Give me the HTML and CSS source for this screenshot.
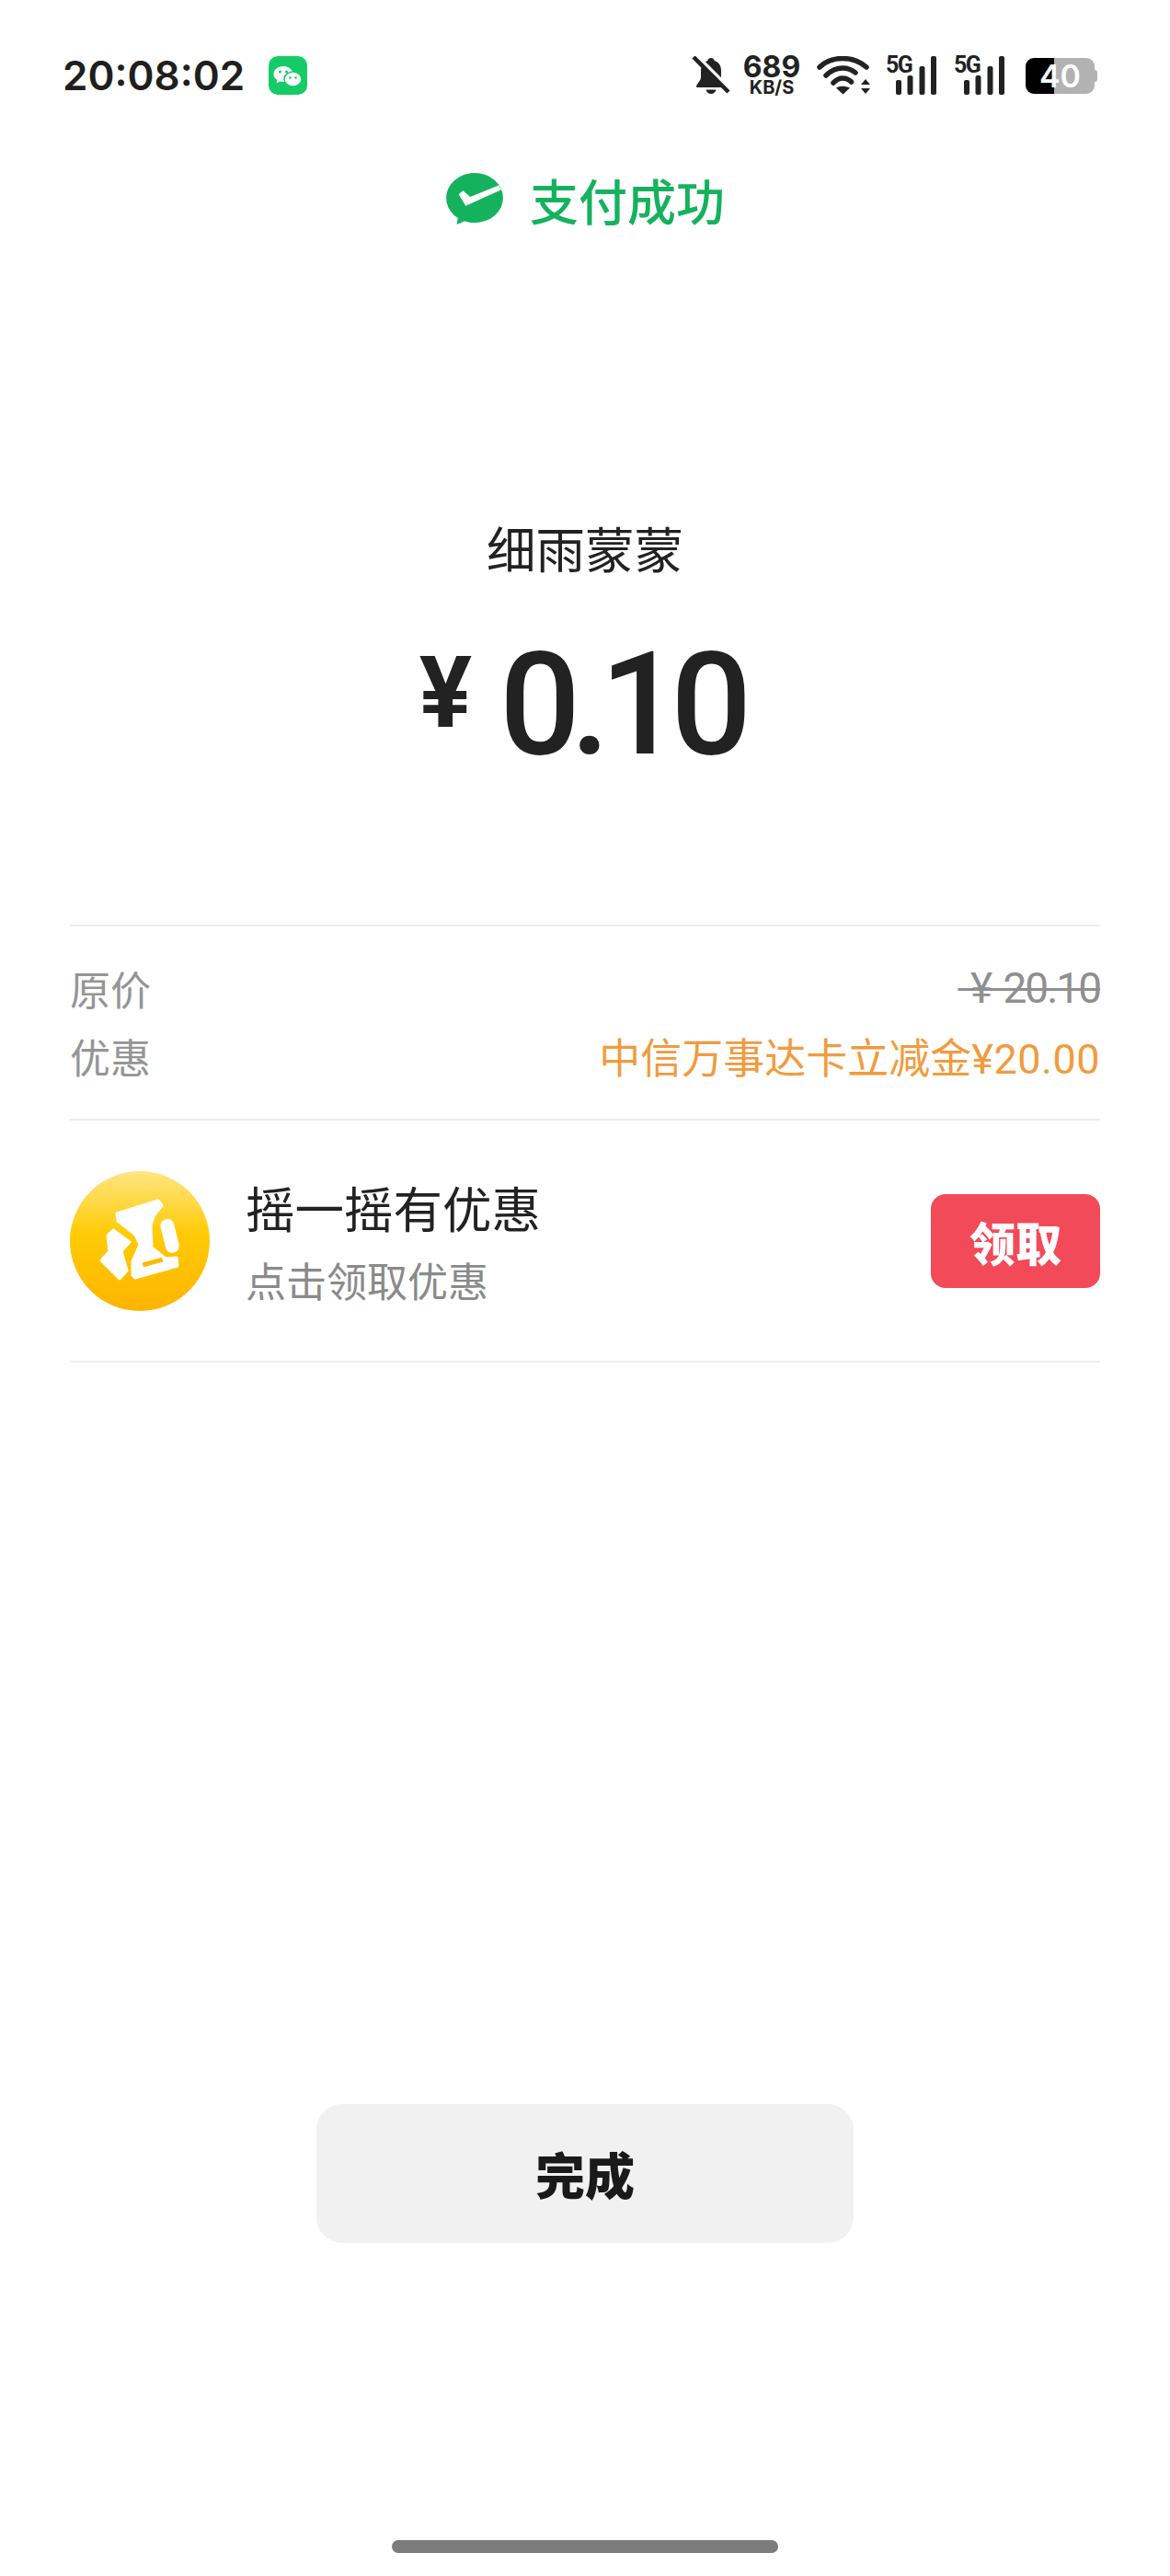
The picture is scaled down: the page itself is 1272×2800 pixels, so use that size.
FILE: index.html
```html
<!DOCTYPE html>
<html lang="zh-CN">
<head>
    <meta charset="UTF-8">
    <meta name="viewport" content="width=device-width, initial-scale=1.0">
    <title>支付成功</title>
    <link rel="stylesheet" href="styles.css">
</head>
<body>
    <div class="page">
        <div class="status">
            <span class="time">20:08:02</span>
            <svg class="app-icon" viewBox="0 0 42 42">
                <rect width="42" height="42" rx="10" fill="#14cc66"/>
                <path d="M16 11c-6 0-10.500 3.800-10.500 8.500 0 2.800 1.500 5 4 6.700l-1 3.300 3.800-1.900c1.200.3 2.400.5 3.700.5 6 0 10.500-3.800 10.500-8.600S22 11 16 11z" fill="#fff"/>
                <ellipse cx="26.500" cy="25" rx="9.500" ry="8" fill="#fff" stroke="#14cc66" stroke-width="1.500"/>
                <circle cx="12.500" cy="17" r="1.500" fill="#14cc66"/>
                <circle cx="19.500" cy="17" r="1.500" fill="#14cc66"/>
                <circle cx="23.500" cy="23.500" r="1.300" fill="#14cc66"/>
                <circle cx="29.500" cy="23.500" r="1.300" fill="#14cc66"/>
            </svg>
            <div class="status-right">
                <svg class="bell" viewBox="0 0 42 42">
                    <path d="M21 2c2 0 3.500 1.300 3.700 3 5 1.500 7.300 5.500 7.300 11v7c0 3 1.800 5.500 4.500 8.500 1 1.200.5 2.500-1 2.500h-29c-1.500 0-2-1.300-1-2.500C7.200 28.500 10 26 10 23v-7c0-5.500 2.300-9.500 7.300-11 .2-1.700 1.700-3 3.700-3z" fill="#222"/>
                    <path d="M15.500 36.500h11c-.6 2.700-2.800 4.500-5.500 4.500s-4.900-1.800-5.500-4.500z" fill="#222"/>
                    <path d="M5 -1L45 39" stroke="#fff" stroke-width="4"/>
                    <path d="M2 1L40 39" stroke="#222" stroke-width="4.500"/>
                </svg>
                <div class="speed">
                    <span class="speed-num">689</span>
                    <span class="speed-unit">KB/S</span>
                </div>
                <svg class="wifi" viewBox="0 0 58 42">
                    <g fill="none" stroke="#222" stroke-width="5.500" stroke-linecap="round">
                        <path d="M3 12C10 5 19 2.500 28 2.500S46 5 54 12"/>
                        <path d="M10 21c5-5 11-8 18-8 5 0 10 1.700 14 5"/>
                        <path d="M18 29c3-3 6-5 10-5 3.500 0 7 1.500 9.500 4"/>
                    </g>
                    <path d="M21 34.500c4-2.500 10-2.500 15 0l-7.500 7z" fill="#222"/>
                    <path d="M48 31l5-6 5 6zM48 35h10l-5 6z" fill="#222"/>
                </svg>
                <div class="signal">
                    <span class="signal-label">5G</span>
                    <svg class="signal-bars" viewBox="0 0 56 42">
                        <rect x="11" y="26" width="6" height="16" rx="2"/>
                        <rect x="23.500" y="21" width="6" height="21" rx="2"/>
                        <rect x="36.500" y="11" width="6" height="31" rx="2"/>
                        <rect x="49" y="0" width="6" height="42" rx="2"/>
                    </svg>
                </div>
                <div class="signal">
                    <span class="signal-label">5G</span>
                    <svg class="signal-bars" viewBox="0 0 56 42">
                        <rect x="11" y="26" width="6" height="16" rx="2"/>
                        <rect x="23.500" y="21" width="6" height="21" rx="2"/>
                        <rect x="36.500" y="11" width="6" height="31" rx="2"/>
                        <rect x="49" y="0" width="6" height="42" rx="2"/>
                    </svg>
                </div>
                <div class="battery">40</div>
            </div>
        </div>

        <div class="result-head">
            <svg class="pay-icon" viewBox="0 0 64 60">
                <ellipse cx="32" cy="28" rx="32" ry="28" fill="#15b25e"/>
                <path d="M14 44l-2 14 16-7z" fill="#15b25e"/>
                <path d="M14 24l5-4 8 7 32-13 3 5-40 18z" fill="#fff"/>
            </svg>
            <span class="result-text">支付成功</span>
        </div>

        <div class="payee">细雨蒙蒙</div>
        <div class="amount">
            <span class="amount-sign">¥</span>
            <span class="amount-num">0.10</span>
        </div>

        <div class="details">
            <div class="detail-row">
                <span>原价</span>
                <span class="price-old">&nbsp;¥ 20.10</span>
            </div>
            <div class="detail-row">
                <span>优惠</span>
                <span class="price-off">中信万事达卡立减金<span class="price-off-num">¥20.00</span></span>
            </div>
        </div>

        <div class="offer">
            <svg class="offer-icon" viewBox="0 0 152 152">
                <defs>
                    <linearGradient id="coin" x1="0" y1="0" x2="0" y2="1">
                        <stop offset="0" stop-color="#ffe582"/>
                        <stop offset="0.45" stop-color="#ffcb05"/>
                        <stop offset="1" stop-color="#ffb400"/>
                    </linearGradient>
                </defs>
                <circle cx="76" cy="76" r="76" fill="url(#coin)"/>
                <g fill="#fff" stroke="#fff" stroke-width="3" stroke-linejoin="round">
                    <path d="M51 46l45-14 4 5-9 12-3 10 1 24 15 12 12-1 1 9-46 13-3-3V98l8-18-5-11-19-15z"/>
                    <path d="M47 64l18 13-9 10 6 21-8 9-20-20 9-10-2-17z"/>
                </g>
                <rect x="101" y="52" width="15" height="37" rx="7" fill="#fff" transform="rotate(-14 108 70)"/>
                <rect x="79" y="96.500" width="22" height="5" fill="#fdb900" transform="rotate(-15 90 99)"/>
            </svg>
            <div class="offer-body">
                <div class="offer-title">摇一摇有优惠</div>
                <div class="offer-sub">点击领取优惠</div>
            </div>
            <button class="offer-btn">领取</button>
        </div>

        <button class="done-btn">完成</button>
        <div class="home-bar"></div>
    </div>
</body>
</html>
```

FILE: styles.css
```css
body {
    margin: 0;
    background-color: #fff;
    font-family: 'Noto Sans CJK SC', 'Noto Sans', sans-serif;
    color: #222;
}

.page {
    display: flex;
    flex-direction: column;
    height: 2800px;
    box-sizing: border-box;
}

/* status bar */
.status {
    display: flex;
    align-items: center;
    height: 44px;
    margin-top: 60px;
    padding: 0 82px 0 68px;
}

.time {
    font-family: 'Inter', sans-serif;
    font-size: 44px;
    font-weight: 600;
    line-height: 44px;
    color: #1f1f1f;
}

.app-icon {
    width: 42px;
    height: 42px;
    margin-left: 26px;
}

.status-right {
    display: flex;
    align-items: center;
    margin-left: auto;
}

.bell {
    width: 42px;
    height: 42px;
}

.speed {
    display: flex;
    flex-direction: column;
    align-items: center;
    width: 62px;
    margin-left: 14px;
    font-family: 'Inter', sans-serif;
    font-weight: 700;
}

.speed-num {
    font-size: 32px;
    line-height: 26px;
}

.speed-unit {
    font-size: 20px;
    line-height: 18px;
}

.wifi {
    width: 58px;
    height: 42px;
    margin-left: 18px;
}

.signal {
    position: relative;
    width: 56px;
    height: 42px;
    margin-left: 17px;
}

.signal + .signal {
    margin-left: 18px;
}

.signal-label {
    position: absolute;
    left: 0;
    top: -3px;
    font-family: 'Roboto', sans-serif;
    font-size: 25px;
    font-weight: 700;
    line-height: 25px;
    letter-spacing: -1.500px;
    color: #222;
}

.signal-bars {
    display: block;
    width: 56px;
    height: 42px;
    fill: #222;
}

.battery {
    position: relative;
    width: 75px;
    height: 39px;
    margin-left: 22px;
    border-radius: 9px;
    background: linear-gradient(to right, #000 41%, #b2b2b2 41%);
    color: #fff;
    font-family: 'Inter', sans-serif;
    font-size: 34px;
    font-weight: 600;
    line-height: 39px;
    text-align: center;
}

.battery::after {
    content: '';
    position: absolute;
    right: -3px;
    top: 13px;
    width: 3px;
    height: 13px;
    border-radius: 0 3px 3px 0;
    background-color: #b2b2b2;
}

/* result */
.result-head {
    display: flex;
    justify-content: center;
    align-items: center;
    gap: 28px;
    height: 58px;
    margin-top: 84px;
}

.pay-icon {
    width: 64px;
    height: 58px;
}

.result-text {
    font-size: 53px;
    font-weight: 500;
    line-height: 58px;
    color: #15b25e;
}

.payee {
    margin-top: 319px;
    font-size: 53.500px;
    line-height: 60px;
    text-align: center;
}

.amount {
    display: flex;
    justify-content: center;
    align-items: flex-start;
    gap: 30px;
    height: 140px;
    margin-top: 71px;
    padding-left: 1px;
    font-family: 'Roboto', sans-serif;
}

.amount-sign {
    margin-top: -2px;
    font-size: 107px;
    font-weight: 700;
    line-height: 120px;
}

.amount-num {
    font-size: 155px;
    font-weight: 500;
    line-height: 140px;
    letter-spacing: -11px;
    margin-right: 11px;
}

/* details */
.details {
    margin: 169px 76px 0;
    padding: 30px 0 31px;
    border-top: 2px solid #ececec;
    border-bottom: 2px solid #ececec;
}

.detail-row {
    display: flex;
    justify-content: space-between;
    height: 74px;
    font-size: 44px;
    line-height: 74px;
    color: #959595;
}

.price-old {
    font-family: 'Roboto', sans-serif;
    font-size: 46px;
    letter-spacing: -2px;
    word-spacing: 4px;
    text-decoration: line-through;
    text-decoration-thickness: 3px;
    color: #8f8f8f;
}

.price-off {
    font-size: 45px;
    color: #f19b3e;
}

.price-off-num {
    font-family: 'Roboto', sans-serif;
    font-size: 45px;
    letter-spacing: 0.500px;
}

/* offer */
.offer {
    display: flex;
    align-items: center;
    height: 261px;
    margin: 0 76px;
    border-bottom: 2px solid #f0f0f0;
}

.offer-icon {
    width: 152px;
    height: 152px;
    flex-shrink: 0;
}

.offer-body {
    flex: 1;
    margin-left: 39px;
}

.offer-title {
    font-size: 53.500px;
    line-height: 70px;
}

.offer-sub {
    margin-top: 14px;
    font-size: 44px;
    line-height: 60px;
    color: #8a8a8a;
}

.offer-btn {
    width: 184px;
    height: 102px;
    border: none;
    border-radius: 16px;
    background-color: #f24a58;
    color: #fff;
    font-family: inherit;
    font-size: 50px;
    font-weight: 900;
    padding: 0;
}

/* bottom */
.done-btn {
    width: 584px;
    height: 151px;
    margin: auto auto 0;
    padding: 0;
    border: none;
    border-radius: 28px;
    background-color: #f1f1f1;
    color: #1a1a1a;
    font-family: inherit;
    font-size: 54px;
    font-weight: 900;
}

.home-bar {
    width: 420px;
    height: 14px;
    margin: 323px auto 25px;
    border-radius: 7px;
    background-color: #7c7c7c;
}
```
